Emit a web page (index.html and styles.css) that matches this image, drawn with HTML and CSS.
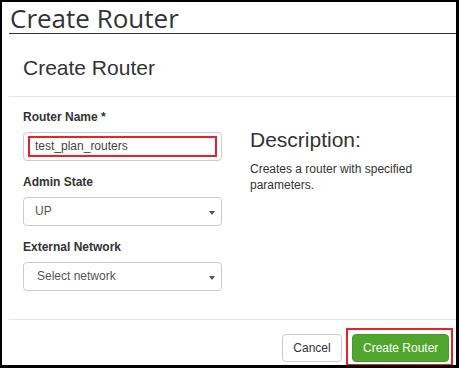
FILE: index.html
```html
<!DOCTYPE html>
<html>
<head>
<meta charset="utf-8">
<link rel="stylesheet" href="styles.css">
</head>
<body>
<div class="frame">
  <div class="title-bar"><h1 class="page-title">Create Router</h1></div>
  <div class="modal">
    <div class="modal-header"><h2 class="modal-title">Create Router</h2></div>
    <div class="modal-body">
      <div class="form-col">
        <div class="group">
          <label class="label">Router Name *</label>
          <div class="control input">test_plan_routers<span class="mark mark-input"></span></div>
        </div>
        <div class="group">
          <label class="label">Admin State</label>
          <div class="control select"><span>UP</span><span class="caret"></span></div>
        </div>
        <div class="group">
          <label class="label">External Network</label>
          <div class="control select"><span class="sel-text">Select network</span><span class="caret"></span></div>
        </div>
      </div>
      <div class="desc-col">
        <h3 class="desc-title">Description:</h3>
        <p class="desc-text">Creates a router with specified parameters.</p>
      </div>
    </div>
    <div class="modal-footer">
      <button class="btn btn-default">Cancel</button>
      <button class="btn btn-primary">Create Router<span class="mark mark-btn"></span></button>
    </div>
  </div>
</div>
</body>
</html>
```
FILE: styles.css
```css
* { box-sizing: border-box; }
html, body { margin: 0; padding: 0; background: #fff; }
body { font-family: "Liberation Sans", Arial, sans-serif; color: #333; }

.frame {
  width: 459px;
  height: 368px;
  border-left: 2px solid #000;
  border-top: 2px solid #000;
  border-right: 3px solid #000;
  border-bottom: 3px solid #000;
  overflow: hidden;
  background: #fff;
}

.title-bar {
  margin-left: 7px;
  height: 32px;
  border-bottom: 1px solid #333;
}
.page-title {
  margin: 0;
  padding: 2px 0 0 1px;
  font-family: "Open Sans", sans-serif;
  font-weight: 400;
  font-size: 26px;
  line-height: 28px;
  color: #333;
}

.modal { margin-left: 7px; }

.modal-header {
  height: 63px;
  padding: 22px 14px 0;
  border-bottom: 1px solid #e5e5e5;
}
.modal-title {
  margin: 0;
  font-weight: 400;
  font-size: 21px;
  line-height: 23px;
  color: #333;
}

.modal-body {
  display: flex;
  gap: 28px;
  padding: 12px 14px 0;
  height: 222px;
}
.form-col { width: 199px; flex: none; }
.group { margin-bottom: 13px; }
.label {
  display: block;
  font-weight: 700;
  font-size: 12px;
  line-height: 17px;
  margin-bottom: 6px;
  color: #333;
}
.control {
  position: relative;
  height: 29px;
  border: 1px solid #ccc;
  border-radius: 4px;
  font-size: 12px;
  line-height: 27px;
  color: #555;
  display: flex;
  align-items: center;
}
.input { padding-left: 11px; color: #444; }
.select { padding: 0 0 0 11px; justify-content: space-between; height: 29px; }
.sel-text { padding-left: 2px; }
.caret {
  width: 0;
  height: 0;
  border-left: 3px solid transparent;
  border-right: 3px solid transparent;
  border-top: 4px solid #555;
  margin-right: 6px;
  margin-top: 2px;
}

.mark {
  position: absolute;
  border: 2px solid #e8212b;
  pointer-events: none;
}
.mark-input { left: 4px; right: 4px; top: 3px; bottom: 3px; }
.mark-btn { left: -7px; right: -5px; top: -7px; bottom: -5px; }

.desc-col { padding-top: 19px; }
.desc-title {
  margin: 0;
  font-weight: 400;
  font-size: 21px;
  line-height: 23px;
  color: #333;
}
.desc-text {
  margin: 10px 0 0;
  font-size: 12px;
  line-height: 16px;
  color: #333;
  width: 170px;
}

.modal-footer {
  border-top: 1px solid #e5e5e5;
  padding: 14px 0 0 273px;
  display: flex;
  gap: 10px;
}
.btn {
  position: relative;
  height: 28px;
  padding: 0 10px;
  border-radius: 4px;
  font-family: "Liberation Sans", Arial, sans-serif;
  font-size: 12px;
  line-height: 26px;
  white-space: nowrap;
  cursor: pointer;
}
.btn-default { background: #fff; border: 1px solid #ccc; color: #333; width: 60px; }
.btn-primary { background: #50a62c; border: 1px solid #46982a; color: #fff; width: 97px; }
```
